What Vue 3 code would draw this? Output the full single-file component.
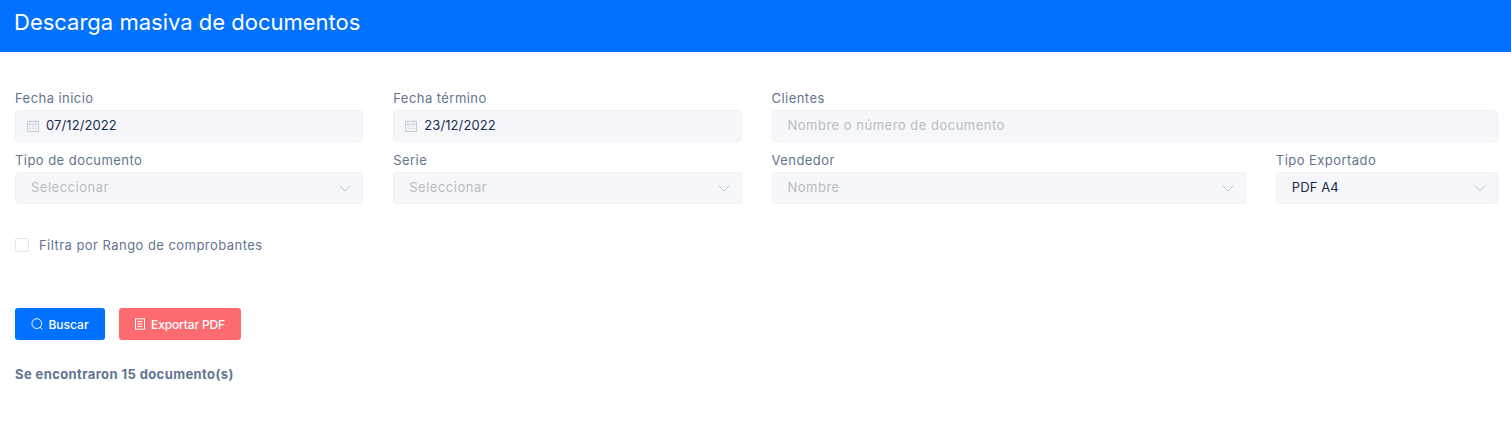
<script setup>
const inputs = [
  { label: 'Fecha inicio', value: '07/12/2022', type: 'date', span: 3 },
  { label: 'Fecha término', value: '23/12/2022', type: 'date', span: 3 },
  { label: 'Clientes', value: 'Nombre o número de documento', type: 'text', span: 6, placeholder: true },
  { label: 'Tipo de documento', value: 'Seleccionar', type: 'select', span: 3, placeholder: true },
  { label: 'Serie', value: 'Seleccionar', type: 'select', span: 3, placeholder: true },
  { label: 'Vendedor', value: 'Nombre', type: 'select', span: 4, placeholder: true },
  { label: 'Tipo Exportado', value: 'PDF A4', type: 'select', span: 2 },
]
const spanClass = { 2: 'span2', 3: 'span3', 4: 'span4', 6: 'span6' }
</script>

<template>
  <div class="page">
    <header class="banner"><h1>Descarga masiva de documentos</h1></header>
    <main class="content">
      <div class="grid">
        <div v-for="f in inputs" :key="f.label" class="field" :class="spanClass[f.span]">
          <label>{{ f.label }}</label>
          <div class="control" :class="{ date: f.type === 'date' }">
            <svg v-if="f.type === 'date'" class="cal" viewBox="0 0 12 12" width="12" height="12" fill="none" stroke="#c6cad1" stroke-width="1">
              <rect x="0.5" y="1.5" width="11" height="10" />
              <path d="M0.5 4h11M3 0v2M9 0v2M2.5 6h1.5M5.2 6h1.5M8 6h1.5M2.5 8.3h1.5M5.2 8.3h1.5M8 8.3h1.5" />
            </svg>
            <span :class="f.placeholder ? 'ph' : 'val'">{{ f.value }}</span>
            <svg v-if="f.type === 'select'" class="chev" viewBox="0 0 12 7" width="12" height="7" fill="none" stroke="#c0c4cc" stroke-width="1">
              <path d="M0.7 0.7 6 6l5.3-5.3" />
            </svg>
          </div>
        </div>
      </div>

      <div class="check">
        <span class="box"></span>
        <span class="check-label">Filtra por Rango de comprobantes</span>
      </div>

      <div class="actions">
        <button class="btn primary" type="button">
          <svg viewBox="0 0 12 12" width="12" height="12" fill="none" stroke="#fff" stroke-width="1">
            <circle cx="5.8" cy="5.6" r="4.9" />
            <path d="M9.2 9.2 11.2 11.4" />
          </svg>
          Buscar
        </button>
        <button class="btn danger" type="button">
          <svg viewBox="0 0 10 12" width="10" height="12" fill="none" stroke="#fff" stroke-width="1">
            <rect x="0.5" y="0.8" width="9" height="10.4" />
            <path d="M2.4 3.6h5M2.4 6h5M2.4 8.4h5" />
          </svg>
          <span class="tight">Exportar PDF</span>
        </button>
      </div>

      <p class="result">Se encontraron 15 documento(s)</p>
    </main>
  </div>
</template>

<style scoped>
.page {
  width: 1511px;
  height: 426px;
  background: #fff;
  overflow: hidden;
  font-family: "Inter", "Liberation Sans", sans-serif;
}
.banner {
  height: 52px;
  background: #0072ff;
  padding: 0 14px;
  box-sizing: border-box;
}
.banner h1 {
  margin: 0;
  padding-top: 9px;
  font-size: 22px;
  line-height: 26px;
  font-weight: 400;
  color: #fff;
}
.content {
  padding: 0 13px 0 15px;
}
.grid {
  display: grid;
  grid-template-columns: repeat(12, minmax(0, 1fr));
  column-gap: 30px;
  row-gap: 9px;
  padding-top: 37px;
}
.span2 { grid-column: span 2; }
.span3 { grid-column: span 3; }
.span4 { grid-column: span 4; }
.span6 { grid-column: span 6; }
.field label {
  display: block;
  height: 21px;
  font-size: 13px;
  line-height: 19px;
  letter-spacing: 0.45px;
  color: #64748f;
}
.control {
  height: 32px;
  box-sizing: border-box;
  background: #f6f7fa;
  border: 1px solid #eff1f5;
  border-radius: 4px;
  display: flex;
  align-items: center;
  padding: 0 15px 2px;
  font-size: 13px;
}
.control.date {
  padding-left: 11px;
}
.cal {
  margin-right: 7px;
  margin-top: 1px;
  flex: none;
}
.val {
  color: #1a2b4b;
  letter-spacing: 0.1px;
}
.ph {
  color: #b9bcc3;
  letter-spacing: 0.5px;
}
.chev {
  margin-left: auto;
  margin-right: -4px;
  margin-top: 2px;
}
.check {
  display: flex;
  align-items: center;
  margin-top: 32px;
  height: 17px;
}
.box {
  width: 14px;
  height: 14px;
  box-sizing: border-box;
  border: 1px solid #e3e5ea;
  border-radius: 2px;
  background: #fff;
  margin-right: 10px;
  flex: none;
}
.check-label {
  font-size: 13px;
  line-height: 15px;
  margin-top: 2px;
  letter-spacing: 0.45px;
  color: #64748f;
}
.actions {
  display: flex;
  gap: 14px;
  margin-top: 55px;
}
.btn {
  height: 32px;
  border: 0;
  border-radius: 3px;
  color: #fff;
  font: 500 12px "Inter", "Liberation Sans", sans-serif;
  display: flex;
  align-items: center;
  justify-content: center;
  gap: 5px;
  padding: 0;
}
.tight {
  letter-spacing: -0.15px;
  margin-left: 1px;
}
.primary {
  width: 90px;
  background: #0072ff;
}
.danger {
  width: 122px;
  background: #fb6b6f;
}
.result {
  margin: 26px 0 0;
  font-size: 13px;
  line-height: 17px;
  font-weight: 700;
  letter-spacing: 0.4px;
  color: #64748f;
}
</style>
